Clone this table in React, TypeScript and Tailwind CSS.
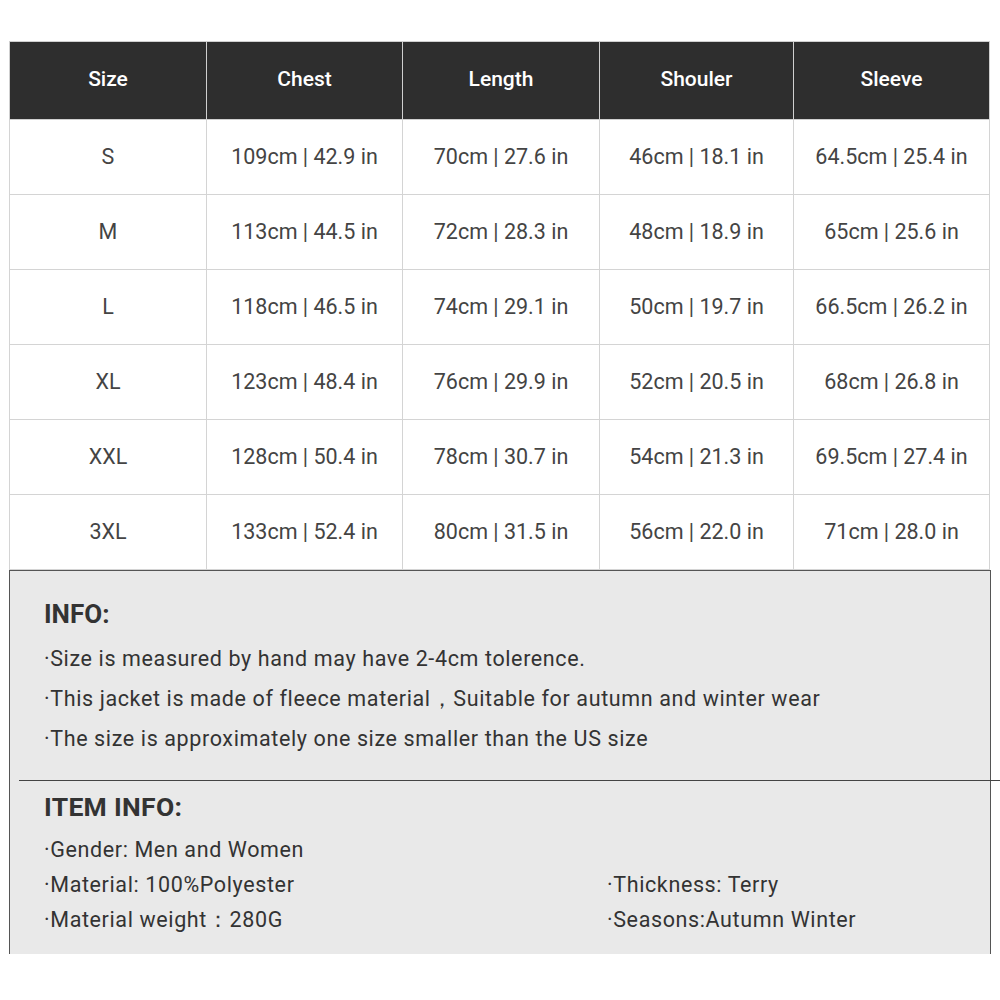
import React from 'react'

const head = ['Size', 'Chest', 'Length', 'Shouler', 'Sleeve']
const rows = [
  ['S', '109cm | 42.9 in', '70cm | 27.6 in', '46cm | 18.1 in', '64.5cm | 25.4 in'],
  ['M', '113cm | 44.5 in', '72cm | 28.3 in', '48cm | 18.9 in', '65cm | 25.6 in'],
  ['L', '118cm | 46.5 in', '74cm | 29.1 in', '50cm | 19.7 in', '66.5cm | 26.2 in'],
  ['XL', '123cm | 48.4 in', '76cm | 29.9 in', '52cm | 20.5 in', '68cm | 26.8 in'],
  ['XXL', '128cm | 50.4 in', '78cm | 30.7 in', '54cm | 21.3 in', '69.5cm | 27.4 in'],
  ['3XL', '133cm | 52.4 in', '80cm | 31.5 in', '56cm | 22.0 in', '71cm | 28.0 in'],
]
const widths = ['w-[197px]', 'w-[196px]', 'w-[197px]', 'w-[194px]', 'w-[196px]']

function App() {
  return (
    <div className="w-[1000px] h-[1000px] bg-white pt-[41px] font-['Roboto',sans-serif]">
      <table className="ml-[9px] w-[980px] border-collapse table-fixed">
        <thead>
          <tr className="h-[78px] bg-[#2e2e2e]">
            {head.map((h, i) => (
              <th key={h} className={`${widths[i]} border border-[#cfcfcf] pb-[2px] text-white text-[21px] font-medium`}>
                {h}
              </th>
            ))}
          </tr>
        </thead>
        <tbody>
          {rows.map((r) => (
            <tr key={r[0]} className="h-[75px]">
              {r.map((c, i) => (
                <td key={i} className="border border-[#d4d4d4] text-center text-[21.5px] text-[#444]">
                  {c}
                </td>
              ))}
            </tr>
          ))}
        </tbody>
      </table>

      <div className="ml-[9px] w-[982px] h-[384px] bg-[#e9e9e9] border-t border-l border-r border-[#555] text-[#333] text-[21.5px] tracking-[0.62px]">
        <div className="pl-[34px] pt-[28px] h-[209px]">
          <div className="text-[26px] font-bold tracking-normal leading-[30px]">INFO:</div>
          <div className="mt-[10px] leading-[40px]">
            <p>·Size is measured by hand may have 2-4cm tolerence.</p>
            <p>·This jacket is made of fleece material，Suitable for autumn and winter wear</p>
            <p>·The size is approximately one size smaller than the US size</p>
          </div>
        </div>
        <div className="ml-[9px] mr-[-11px] h-px bg-[#444]"></div>
        <div className="pl-[34px] pt-[11px]">
          <div className="text-[26.5px] font-bold tracking-[0.3px] leading-[30px]">ITEM INFO:</div>
          <div className="mt-[10px] leading-[35px]">
            <p>·Gender: Men and Women</p>
            <div className="flex">
              <p className="w-[563px]">·Material: 100%Polyester</p>
              <p>·Thickness: Terry</p>
            </div>
            <div className="flex">
              <p className="w-[563px]">·Material weight：280G</p>
              <p>·Seasons:Autumn Winter</p>
            </div>
          </div>
        </div>
      </div>
    </div>
  )
}

export default App
